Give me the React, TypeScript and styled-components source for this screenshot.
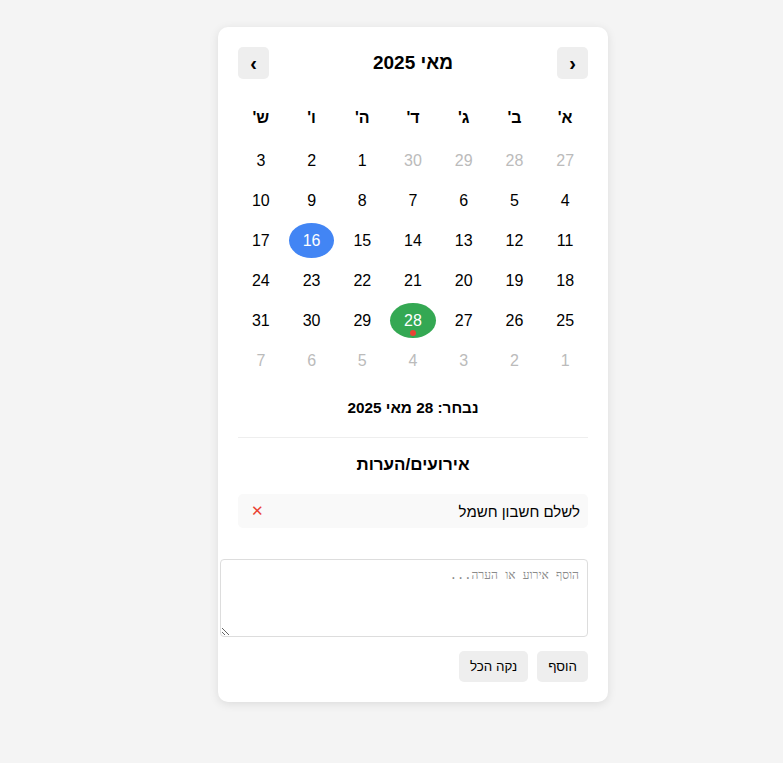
import React, { useState } from 'react';
import styled, { createGlobalStyle, css } from 'styled-components';

const GlobalStyle = createGlobalStyle`
    body {
        margin: 0;
        background: #f4f4f4;
        font-family: "Liberation Sans", Arial, sans-serif;
        color: #000;
    }
`;

const Page = styled.div`
    padding: 27px 0 40px 218px;
`;

const Card = styled.div`
    direction: rtl;
    width: 350px;
    padding: 20px;
    background: #fff;
    border-radius: 10px;
    box-shadow: 0 2px 10px rgba(0, 0, 0, 0.1);
`;

const Header = styled.div`
    display: flex;
    align-items: center;
    justify-content: space-between;
    height: 32px;
    margin-bottom: 22px;
`;

const NavButton = styled.button`
    width: 31px;
    height: 32px;
    border: none;
    border-radius: 5px;
    background: #eee;
    font-family: "Liberation Sans", Arial, sans-serif;
    font-size: 20px;
    font-weight: bold;
    color: #000;
    padding: 0;
    cursor: pointer;
`;

const Title = styled.h2`
    margin: 0;
    font-size: 19px;
    font-weight: bold;
`;

const Grid = styled.div`
    display: grid;
    grid-template-columns: repeat(7, 1fr);
    column-gap: 5px;
    row-gap: 5px;
`;

const WeekRow = styled(Grid)`
    margin-bottom: 8px;
`;

const WeekDay = styled.div`
    height: 34px;
    line-height: 34px;
    text-align: center;
    font-weight: bold;
    font-size: 16px;
`;

const Day = styled.div<{ $muted?: boolean; $today?: boolean; $selected?: boolean }>`
    position: relative;
    height: 35px;
    line-height: 35px;
    text-align: center;
    font-size: 16px;
    border-radius: 50%;
    color: ${p => (p.$muted ? '#bbb' : '#000')};
    ${p => p.$today && css`
        background: #4285f4;
        color: #fff;
    `}
    ${p => p.$selected && css`
        background: #34a853;
        color: #fff;
    `}
`;

const Dot = styled.span`
    position: absolute;
    left: 50%;
    bottom: 2px;
    width: 6px;
    height: 6px;
    margin-left: -3px;
    border-radius: 50%;
    background: #ea4335;
`;

const Selected = styled.div`
    margin-top: 20px;
    padding-bottom: 20px;
    border-bottom: 1px solid #eee;
    text-align: center;
    font-weight: bold;
    font-size: 15.3px;
    line-height: 19px;
`;

const Section = styled.h3`
    margin: 16px 0 19px;
    text-align: center;
    font-size: 17px;
    font-weight: bold;
    line-height: 21px;
`;

const EventList = styled.ul`
    list-style: none;
    margin: 0 0 31px;
    padding: 0;
`;

const EventItem = styled.li`
    display: flex;
    align-items: center;
    justify-content: space-between;
    height: 34px;
    padding: 0 8px 0 10px;
    background: #f9f9f9;
    border-radius: 5px;
    font-size: 15px;
    margin-bottom: 5px;
`;

const RemoveButton = styled.button`
    border: none;
    background: none;
    color: #ea4335;
    font-family: "DejaVu Sans", sans-serif;
    font-size: 15px;
    font-weight: bold;
    padding: 0 3px;
    cursor: pointer;
`;

const NoteInput = styled.textarea`
    display: block;
    width: 350px;
    height: 60px;
    padding: 8px;
    border: 1px solid #ddd;
    border-radius: 4px;
    font-family: monospace;
    font-size: 12px;
    resize: vertical;
    &::placeholder {
        color: #8a8a8a;
    }
`;

const Actions = styled.div`
    display: flex;
    gap: 9px;
    margin-top: 14px;
`;

const ActionButton = styled.button`
    height: 31px;
    padding: 0 11px;
    border: none;
    border-radius: 5px;
    background: #eee;
    font-family: "Liberation Sans", Arial, sans-serif;
    font-size: 13.33px;
    color: #000;
    cursor: pointer;
`;

const weekDays = ["א'", "ב'", "ג'", "ד'", "ה'", "ו'", "ש'"];

type Cell = { n: number; muted?: boolean };

const cells: Cell[] = [
    ...[27, 28, 29, 30].map(n => ({ n, muted: true })),
    ...Array.from({ length: 31 }, (_, i) => ({ n: i + 1 })),
    ...[1, 2, 3, 4, 5, 6, 7].map(n => ({ n, muted: true })),
];

export default function App() {
    const [events, setEvents] = useState(['לשלם חשבון חשמל']);
    const [note, setNote] = useState('');

    return (
        <Page>
            <GlobalStyle />
            <Card>
                <Header>
                    <NavButton>‹</NavButton>
                    <Title>מאי 2025</Title>
                    <NavButton>›</NavButton>
                </Header>
                <WeekRow>
                    {weekDays.map(d => <WeekDay key={d}>{d}</WeekDay>)}
                </WeekRow>
                <Grid>
                    {cells.map((c, i) => (
                        <Day
                            key={i}
                            $muted={c.muted}
                            $today={!c.muted && c.n === 16}
                            $selected={!c.muted && c.n === 28}
                        >
                            {c.n}
                            {!c.muted && c.n === 28 && <Dot />}
                        </Day>
                    ))}
                </Grid>
                <Selected>נבחר: 28 מאי 2025</Selected>
                <Section>אירועים/הערות</Section>
                <EventList>
                    {events.map((e, i) => (
                        <EventItem key={i}>
                            <span>{e}</span>
                            <RemoveButton onClick={() => setEvents(events.filter((_, j) => j !== i))}>✕</RemoveButton>
                        </EventItem>
                    ))}
                </EventList>
                <NoteInput
                    placeholder="הוסף אירוע או הערה..."
                    value={note}
                    onChange={e => setNote(e.target.value)}
                />
                <Actions>
                    <ActionButton onClick={() => { if (note) { setEvents([...events, note]); setNote(''); } }}>הוסף</ActionButton>
                    <ActionButton onClick={() => setEvents([])}>נקה הכל</ActionButton>
                </Actions>
            </Card>
        </Page>
    );
}
